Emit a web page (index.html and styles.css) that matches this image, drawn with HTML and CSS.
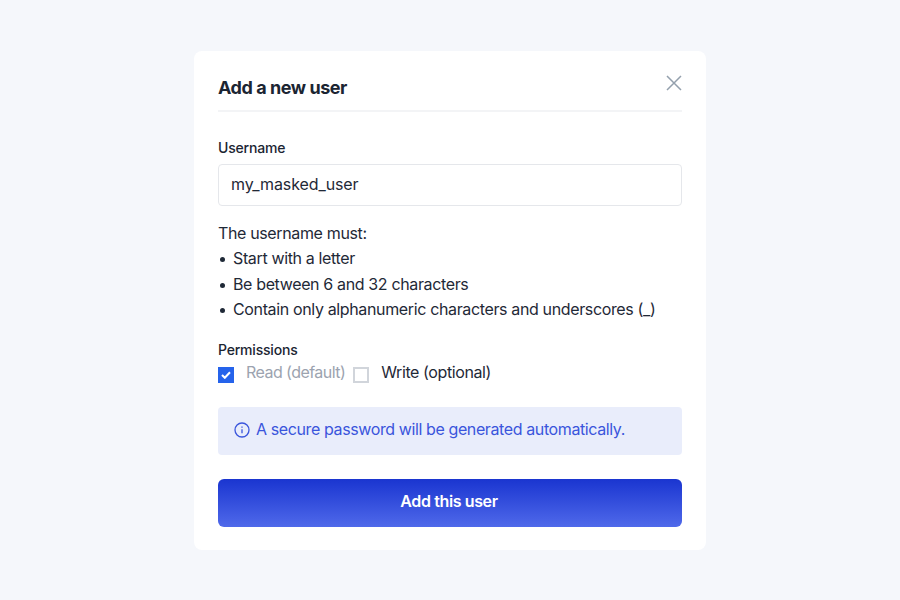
FILE: index.html
```html
<!DOCTYPE html>
<html lang="en">
<head>
<meta charset="utf-8">
<title>Add a new user</title>
<link rel="stylesheet" href="styles.css">
</head>
<body>
<main class="card">
  <header class="head">
    <h1 class="title">Add a new user</h1>
    <button class="close" aria-label="Close">
      <svg width="16" height="16" viewBox="0 0 16 16" fill="none" stroke="#94a0ad" stroke-width="1.5"><path d="M1 1l14 14M15 1L1 15"/></svg>
    </button>
  </header>
  <label class="label" for="u">Username</label>
  <input class="input" id="u" value="my_masked_user">
  <div class="rules">
    <p class="rules-intro">The username must:</p>
    <ul class="rules-list">
      <li>Start with a letter</li>
      <li>Be between 6 and 32 characters</li>
      <li>Contain only alphanumeric characters and underscores (_)</li>
    </ul>
  </div>
  <div class="label perm-label">Permissions</div>
  <div class="perms">
    <span class="check check-on">
      <svg width="10" height="8" viewBox="0 0 10 8" fill="none" stroke="#fff" stroke-width="2"><path d="M1 4l2.8 2.8L9 1.2"/></svg>
    </span>
    <span class="perm-text muted">Read (default)</span>
    <span class="check"></span>
    <span class="perm-text">Write (optional)</span>
  </div>
  <div class="info">
    <svg class="info-icon" width="16" height="16" viewBox="0 0 16 16" fill="none" stroke="#3a55dc" stroke-width="1.3"><circle cx="8" cy="8" r="7"/><path d="M8 7.2v4M8 4.4v1.3"/></svg>
    <span class="info-text">A secure password will be generated automatically.</span>
  </div>
  <button class="submit">Add this user</button>
</main>
</body>
</html>
```

FILE: styles.css
```css
* { box-sizing: border-box; }
html, body { height: 100%; }
body {
  margin: 0;
  background: #f5f7fb;
  font-family: Inter, "Liberation Sans", sans-serif;
  color: #1f2937;
  display: flex;
  align-items: center;
  justify-content: center;
}
.card {
  width: 512px;
  background: #fff;
  border-radius: 8px;
  padding: 24px 24px 23px;
}
.head {
  display: flex;
  justify-content: space-between;
  align-items: flex-start;
  height: 37px;
  border-bottom: 2px solid #f3f4f6;
  margin-bottom: 27px;
}
.title {
  margin: 0;
  font-size: 18px;
  line-height: 26px;
  font-weight: 700;
  color: #1b2532;
  letter-spacing: -0.45px;
}
.close {
  border: 0;
  background: none;
  padding: 0;
  display: block;
  height: 16px;
}
.label {
  display: block;
  font-size: 14px;
  line-height: 18px;
  font-weight: 500;
  color: #1b2532;
  margin-bottom: 7px;
  letter-spacing: -0.2px;
}
.input {
  display: block;
  width: 100%;
  height: 42px;
  border: 1px solid #e5e7eb;
  border-radius: 4px;
  padding: 0 12px 2px;
  font: 400 16px Inter, "Liberation Sans", sans-serif;
  letter-spacing: -0.1px;
  color: #1f2937;
  background: #fff;
}
.rules {
  margin-top: 15px;
  font-size: 16px;
  line-height: 25.5px;
  letter-spacing: -0.36px;
}
.rules-intro { margin: 0; }
.rules-list {
  margin: 0;
  padding: 0;
  list-style: none;
}
.rules-list li {
  display: flex;
  align-items: center;
}
.rules-list li::before {
  content: "";
  flex: none;
  width: 5px;
  height: 5px;
  margin: 2px 8px 0 2px;
  border-radius: 50%;
  background: #1f2937;
}
.perm-label { margin: 18px 0 0; }
.perms {
  display: flex;
  align-items: center;
  height: 24px;
  margin-top: 1px;
  font-size: 16px;
  letter-spacing: -0.4px;
}
.check {
  width: 16px;
  height: 16px;
  margin-top: 6px;
  border: 2px solid #d1d5db;
  display: flex;
  align-items: center;
  justify-content: center;
  flex: none;
}
.check-on {
  background: #2563eb;
  border-color: #2563eb;
}
.perm-text { margin-left: 12px; margin-right: 8px; }
.muted { color: #9ca3af; letter-spacing: -0.55px; }
.info {
  display: flex;
  align-items: center;
  gap: 6px;
  height: 48px;
  margin-top: 23px;
  padding: 0 16px;
  background: #e9edfb;
  border-radius: 4px;
  color: #3a55dc;
  font-size: 16px;
  letter-spacing: -0.39px;
}
.info-icon { margin-top: -2px; }
.info-text { margin-top: -3px; }
.submit {
  display: block;
  width: 100%;
  height: 48px;
  margin-top: 24px;
  padding: 0 2px 4px 0;
  border: 0;
  border-radius: 6px;
  background: linear-gradient(180deg, #1a35d0 0%, #4f69ea 100%);
  color: #fff;
  font: 600 16px Inter, "Liberation Sans", sans-serif;
  letter-spacing: -0.38px;
}
```
